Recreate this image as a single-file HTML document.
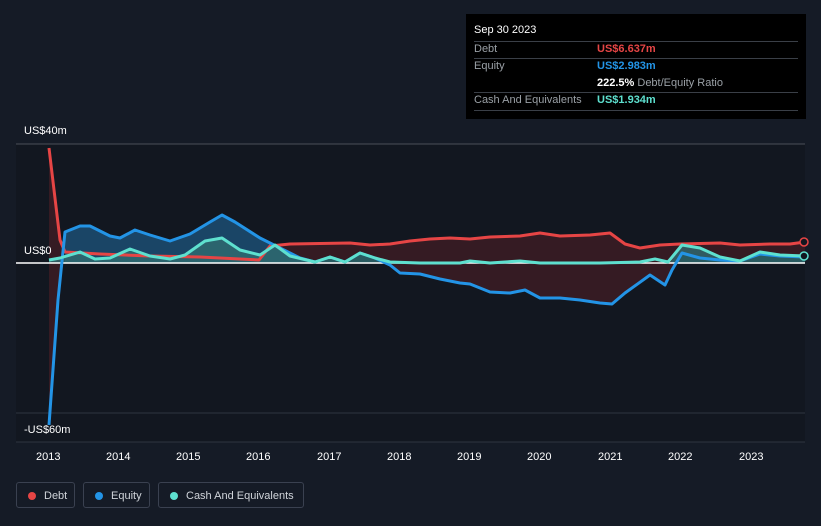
<!DOCTYPE html>
<html><head><style>
body{margin:0;width:821px;height:526px;background:#151b26;font-family:"Liberation Sans",sans-serif;overflow:hidden;position:relative}
.t{position:absolute;color:#fff;font-size:11px}
.tip{position:absolute;left:466px;top:14px;width:340px;height:105px;background:#000;font-size:11px;color:#9aa0a6}
.tip .r{position:absolute;left:8px;right:8px;border-top:1px solid #3a3f47}
.lg{position:absolute;top:482px;height:26px;border:1px solid #3a4150;border-radius:3px;color:#d0d4da;font-size:11px;line-height:26px;box-sizing:border-box}
.lg i{display:inline-block;width:8px;height:8px;border-radius:50%;margin:0 8px 0 11px;vertical-align:-0.5px}
</style></head><body>
<svg width="821" height="526" style="position:absolute;left:0;top:0">
<rect x="16" y="144" width="789" height="298" fill="#121720"/>
<line x1="16" y1="144" x2="805" y2="144" stroke="#4a4f58"/>
<line x1="16" y1="413" x2="805" y2="413" stroke="#2e3440"/>
<line x1="16" y1="442" x2="805" y2="442" stroke="#2e3440"/>
<path d="M49,148 L60,240 65,252 100,254 150,256 200,257 259,260 270,246 290,244 350,243 370,245 390,244 410,241 430,239 450,238 470,239 490,237 520,236 540,233 560,236 590,235 610,233 625,244 640,248 660,245 680,244 720,243 740,245 770,244 790,244 805,242 L805,257 780,256 760,254 740,261 720,260 700,258 682,253 672,270 665,285 650,275 625,293 612,304 600,303 580,300 560,298 540,298 525,290 510,293 490,292 470,284 460,283 440,279 420,274 400,273 390,265 375,258 360,253 345,262 330,257 315,262 300,258 280,248 260,238 235,222 222,215 210,222 190,234 170,241 150,235 135,230 120,238 110,236 90,226 80,226 65,232 58,300 49,425Z" fill="#3a1c24" opacity="0.9"/>
<path d="M65,263 L65,232 80,226 90,226 110,236 120,238 135,230 150,235 170,241 190,234 210,222 222,215 235,222 260,238 280,248 300,258 315,262 315,263Z" fill="#1a4566"/>
<path d="M49,263 L49,260 60,258 80,252 95,259 110,258 130,249 150,256 170,259 185,255 205,241 222,238 240,250 260,255 275,245 290,256 315,262 330,257 345,262 360,253 375,258 390,262 390,263Z M670,263 L682,245 700,248 720,257 740,261 760,252 780,255 805,256 805,263Z" fill="#2f6c70" opacity="0.8"/>
<line x1="16" y1="263" x2="805" y2="263" stroke="#fff" stroke-width="1.5"/>
<path d="M49,148 L60,240 65,252 100,254 150,256 200,257 259,260 270,246 290,244 350,243 370,245 390,244 410,241 430,239 450,238 470,239 490,237 520,236 540,233 560,236 590,235 610,233 625,244 640,248 660,245 680,244 720,243 740,245 770,244 790,244 805,242" fill="none" stroke="#e64545" stroke-width="3" stroke-linejoin="round"/>
<path d="M49,425 L58,300 65,232 80,226 90,226 110,236 120,238 135,230 150,235 170,241 190,234 210,222 222,215 235,222 260,238 280,248 300,258 315,262 330,257 345,262 360,253 375,258 390,265 400,273 420,274 440,279 460,283 470,284 490,292 510,293 525,290 540,298 560,298 580,300 600,303 612,304 625,293 650,275 665,285 672,270 682,253 700,258 720,260 740,261 760,254 780,256 805,257" fill="none" stroke="#2394e6" stroke-width="3" stroke-linejoin="round"/>
<path d="M49,260 L60,258 80,252 95,259 110,258 130,249 150,256 170,259 185,255 205,241 222,238 240,250 260,255 275,245 290,256 315,262 330,257 345,262 360,253 375,258 390,262 420,263 460,263 470,261 490,263 520,261 540,263 600,263 640,262 655,259 668,262 682,245 700,248 720,257 740,261 760,252 780,255 805,256" fill="none" stroke="#5ee0cf" stroke-width="3" stroke-linejoin="round"/>
<circle cx="804" cy="242" r="4" fill="#121720" stroke="#e64545" stroke-width="1.5"/>
<circle cx="804" cy="256" r="4" fill="#121720" stroke="#5ee0cf" stroke-width="1.5"/>
</svg>
<div class="t" style="left:24px;top:125px">US$40m</div>
<div class="t" style="left:24px;top:245px">US$0</div>
<div class="t" style="left:24px;top:424px">-US$60m</div>
<div class="t" style="left:36px;top:451px;width:800px;font-size:11px">
<span style="position:absolute;left:0">2013</span><span style="position:absolute;left:70px">2014</span><span style="position:absolute;left:140px">2015</span><span style="position:absolute;left:210px">2016</span><span style="position:absolute;left:281px">2017</span><span style="position:absolute;left:351px">2018</span><span style="position:absolute;left:421px">2019</span><span style="position:absolute;left:491px">2020</span><span style="position:absolute;left:562px">2021</span><span style="position:absolute;left:632px">2022</span><span style="position:absolute;left:703px">2023</span></div>
<div class="tip">
<div style="position:absolute;left:8px;top:10px;color:#fff">Sep 30 2023</div>
<div class="r" style="top:27px"></div>
<div style="position:absolute;left:8px;top:29px">Debt</div><div style="position:absolute;left:131px;top:29px;color:#e64545;font-weight:bold">US$6.637m</div>
<div class="r" style="top:44px"></div>
<div style="position:absolute;left:8px;top:46px">Equity</div><div style="position:absolute;left:131px;top:46px;color:#2394e6;font-weight:bold">US$2.983m</div>
<div style="position:absolute;left:131px;top:63px"><b style="color:#fff">222.5%</b> Debt/Equity Ratio</div>
<div class="r" style="top:78px"></div>
<div style="position:absolute;left:8px;top:80px">Cash And Equivalents</div><div style="position:absolute;left:131px;top:80px;color:#5ee0cf;font-weight:bold">US$1.934m</div>
<div class="r" style="top:96px"></div>
</div>
<div class="lg" style="left:16px;width:59px"><i style="background:#e64545"></i>Debt</div>
<div class="lg" style="left:83px;width:67px"><i style="background:#2394e6"></i>Equity</div>
<div class="lg" style="left:158px;width:146px"><i style="background:#5ee0cf"></i>Cash And Equivalents</div>
</body></html>
